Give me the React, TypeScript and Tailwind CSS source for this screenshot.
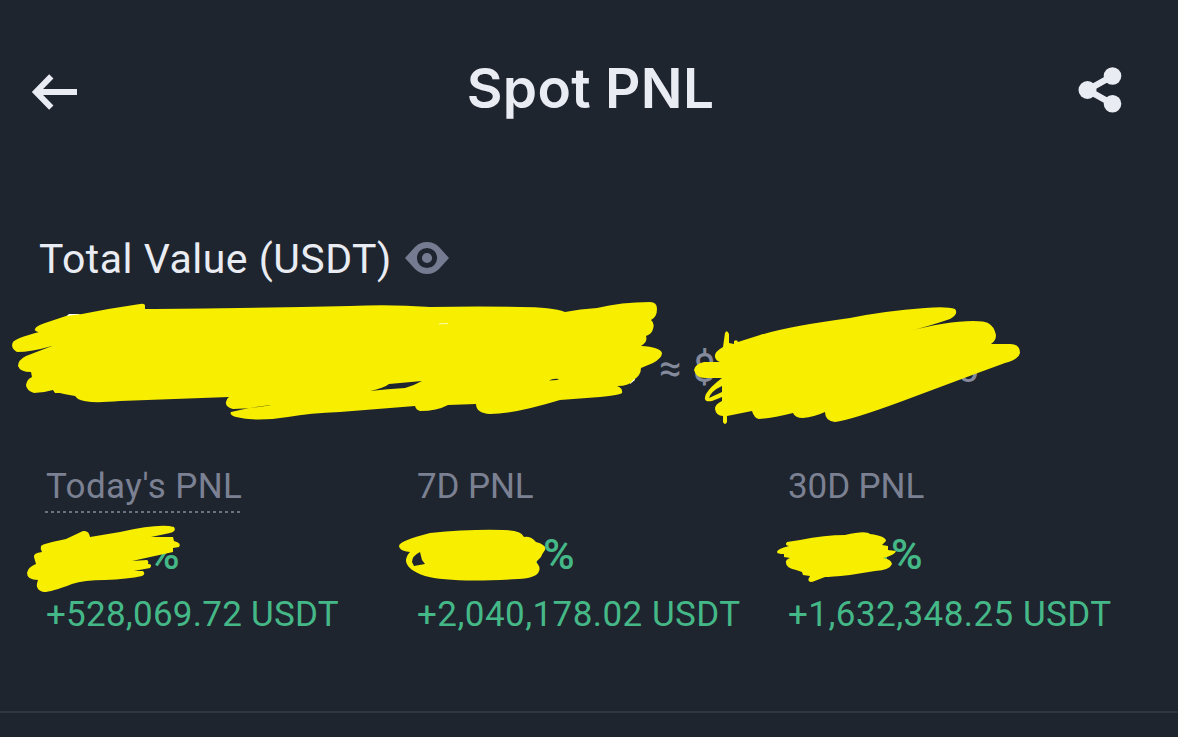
import type { ReactNode } from 'react';

interface PnlColumn {
  label: string;
  amount: string;
  dotted?: boolean;
  labelClass: string;
  percentClass: string;
  amountClass: string;
}

const columns: PnlColumn[] = [
  {
    label: "Today's PNL",
    amount: '+528,069.72 USDT',
    dotted: true,
    labelClass: 'tracking-[0.4px]',
    percentClass: 'pl-[102px]',
    amountClass: 'tracking-[0.25px]',
  },
  {
    label: '7D PNL',
    amount: '+2,040,178.02 USDT',
    labelClass: 'tracking-[-0.1px]',
    percentClass: 'pl-[126px]',
    amountClass: 'tracking-[0.45px]',
  },
  {
    label: '30D PNL',
    amount: '+1,632,348.25 USDT',
    labelClass: 'tracking-[-0.1px]',
    percentClass: 'pl-[103px]',
    amountClass: 'tracking-[0.45px]',
  },
];

export default function App() {
  return (
    <div className="relative h-[737px] w-[1178px] overflow-hidden bg-[#1f252f] font-['Roboto',sans-serif] text-[#eaecf3]">
      <header className="flex h-[180px] items-center justify-between pr-[56px] pl-[31px]">
        <BackIcon />
        <h1 className="mb-[4px] pl-[25px] font-['Inter',sans-serif] text-[55px] leading-[66px] font-semibold tracking-[0.3px]">
          Spot PNL
        </h1>
        <ShareIcon />
      </header>

      <section className="pt-[54px] pl-[39px]">
        <div className="flex h-[50px] items-center">
          <h2 className="w-[366px] text-[41px] leading-[50px] tracking-[0.5px] whitespace-nowrap">
            Total Value (USDT)
          </h2>
          <EyeIcon />
        </div>
        <div className="mt-[60px] flex h-[50px] items-center pl-[620px] text-[40px] leading-[50px] text-[#848a9c]">
          <span className="w-[34px]">≈</span>
          <span className="w-[264px]">$</span>
          <span>0</span>
        </div>
      </section>

      <section className="mt-[68px] grid grid-cols-[371px_371px_1fr] pl-[46px]">
        {columns.map((column) => (
          <PnlCell key={column.label} column={column} />
        ))}
      </section>

      <div className="mt-[72px] h-[2px] bg-[#2f3641]" />

      <Scribbles />
    </div>
  );
}

function PnlCell({ column }: { column: PnlColumn }) {
  return (
    <div className="whitespace-nowrap">
      <div className="h-[50px] text-[35px] leading-[50px] text-[#7b8192]">
        <span className={column.labelClass}>{column.label}</span>
        {column.dotted && <DottedLine />}
      </div>
      <div className={`${column.percentClass} mt-[19px] h-[46px] text-[43px] leading-[46px] font-medium text-[#45b888]`}>
        %
      </div>
      <div className={`${column.amountClass} mt-[14px] h-[48px] text-[35px] leading-[48px] text-[#45b888]`}>
        {column.amount}
      </div>
    </div>
  );
}

function DottedLine() {
  return (
    <svg className="-mt-px -ml-px block h-[2px] w-[196px]" viewBox="0 0 196 2">
      <path d="M0 1H195" stroke="#848a9c" strokeWidth="1.6" strokeDasharray="3 3" />
    </svg>
  );
}

function BackIcon() {
  return (
    <svg className="mt-[4px] h-[36px] w-[47px]" viewBox="0 0 47 36" fill="none" stroke="currentColor" strokeWidth="6">
      <path d="M20.3 2.3L5 18L20.3 33.7M6 18H46" />
    </svg>
  );
}

function ShareIcon() {
  return (
    <svg className="h-[46px] w-[44px]" viewBox="0 0 44 46" fill="currentColor">
      <path d="M34.5 9L9.5 23L34.5 37" fill="none" stroke="currentColor" strokeWidth="6.5" />
      <circle cx="9.5" cy="23" r="9" />
      <circle cx="34.5" cy="9" r="8.8" />
      <circle cx="34.5" cy="36.8" r="8.8" />
    </svg>
  );
}

function EyeIcon() {
  return (
    <svg className="mb-[2px] h-[32px] w-[44px]" viewBox="0 0 44 32">
      <path d="M0 16L10 5Q15 0 22 0Q29 0 34 5L44 16L34 27Q29 32 22 32Q15 32 10 27Z" fill="#757c91" />
      <circle cx="22" cy="16" r="7.6" fill="none" stroke="#1f252f" strokeWidth="5" />
    </svg>
  );
}

function Stroke({ children }: { children: ReactNode }) {
  return (
    <g fill="#f7ee00" fillRule="evenodd">
      {children}
    </g>
  );
}

// Marker strokes drawn by hand over the private numbers
function Scribbles() {
  return (
    <svg className="pointer-events-none absolute inset-0 h-[737px] w-[1178px]" viewBox="0 0 1178 737">
      <path d="M64 318L69 314H79L83 318Z" fill="#fff" />
      <path d="M630 380L634 376L635 380L630 384Z" fill="#fff" />
      <path d="M529 561L537 555V564Z" fill="#45b888" />
      <path d="M882 560L887 550V561Z" fill="#45b888" />
      <Stroke>
        <path d="M35 329Q36 326 45 323L66 316L82 314Q112 308 140 304Q145 303 145 306V309L155 309Q250 308 350 306Q390 304 430 307Q480 306 520 307Q552 307 565 312Q580 309 597 308Q621 302 650 302Q657 302 657 309Q657 317 651 320Q655 323 653 329Q652 334 646 336Q648 342 641 346Q660 347 662 353Q662 358 653 363L641 368Q641 376 633 380Q630 386 617 386Q623 388 622 393Q620 395 600 397L560 400Q514 414 490 414Q476 413 476 404L448 405Q437 411 420 411Q416 410 415 406L340 412Q310 413 288 417Q256 422 236 417Q229 415 231 412L249 408L271 405Q249 409 233 409Q225 407 226 402Q227 398 229 397L120 401Q86 404 78 399L75 396L64 394L60 393L55 393L53 390Q43 393 34 393Q26 390 26 385Q27 379 32 377L31 372Q20 372 18 366Q18 360 26 356L52 346Q31 352 17 352Q10 348 13 342Q16 338 39 332Q34 331 35 329Z" />
        <path d="M729 343L729 334Q727 329 725 333L723 347Q714 352 715 357Q716 361 720 362L704 362Q695 364 694 370Q696 378 705 378H722Q710 387 706 394Q702 403 712 401L722 397V401Q715 404 715 409Q716 416 723 416V422Q725 426 727 422V416L752 411Q754 418 759 419Q773 418 793 413Q795 418 803 418Q814 417 825 412Q825 421 835 422Q851 420 900 402L975 374L1005 363Q1019 359 1020 353Q1020 344 1010 344H991Q996 341 996 335Q994 326 988 323Q985 321 973 321Q947 321 905 332Q930 326 950 319Q959 314 955 309Q947 306 925 308Q884 311 850 318Q790 326 760 335L738 342Q737 339 734 341V344ZM709 398Q711 391 722 386V392Z" />
        <path d="M41 546Q42 544 66 539L83 531Q89 530 90 537L120 532Q160 523 174 527Q177 531 170 533L151 537H173L174 541Q182 543 179 547L173 548V552L132 561L147 560Q149 561 148 564Q153 564 150 568L134 571H143Q146 574 142 576Q128 579 105 580Q84 580 72 584Q51 592 44 592Q34 590 38 580Q27 580 27 573Q28 567 36 564L34 557Q33 553 42 552Q40 549 41 546Z" />
        <path d="M399 546Q399 541 430 533Q470 529 503 530Q522 530 524 537Q531 536 536 542Q547 545 545 550Q542 554 541 557L536 562Q541 567 539 571Q537 578 518 579Q450 583 425 576Q407 570 406 561Q406 556 410 552Q399 551 399 546ZM412 562Q412 556 420 552L422 560L425 564L414 566Z" />
        <path d="M777 552Q777 549 789 546Q784 545 787 542L800 540Q825 535 845 535Q866 530 870 534Q886 536 886 541L882 545L888 546V550L896 551Q895 555 883 558Q891 559 892 564Q890 570 875 571L850 575Q830 577 825 577L812 582Q806 582 810 576L803 575L802 572L796 570Q786 568 786 563Q785 560 790 558L784 557V554Q777 554 777 552Z" />
      </Stroke>
      <g fill="#1f252f">
        <path d="M370 391Q384 388 389 384L422 381Q413 386 405 388Q388 389 370 391Z" />
        <path d="M549 380.5Q553 378 559 379Q559 380 549 380.5Z" />
      </g>
      <path d="M439 323.8L448 323.5" stroke="#fff" strokeWidth="0.7" />
    </svg>
  );
}
